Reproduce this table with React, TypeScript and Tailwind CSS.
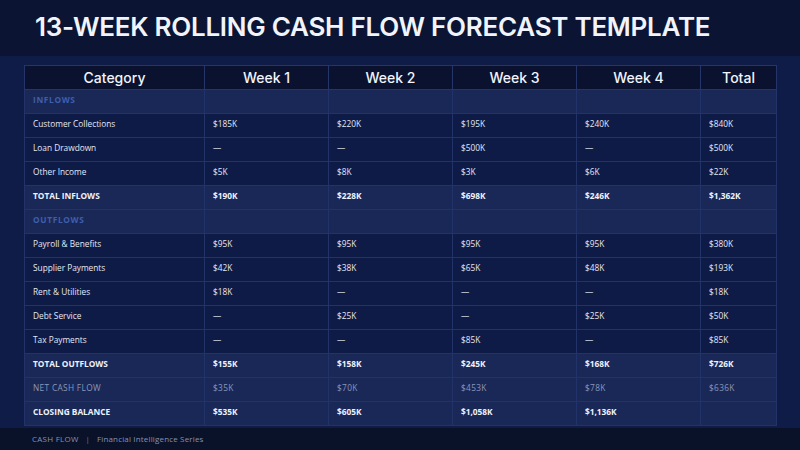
import React from "react";

type Row = {
  label: string;
  values: string[];
  kind: "section" | "item" | "total" | "net" | "closing";
};

const rows: Row[] = [
  { label: "INFLOWS", values: ["", "", "", "", ""], kind: "section" },
  { label: "Customer Collections", values: ["$185K", "$220K", "$195K", "$240K", "$840K"], kind: "item" },
  { label: "Loan Drawdown", values: ["—", "—", "$500K", "—", "$500K"], kind: "item" },
  { label: "Other Income", values: ["$5K", "$8K", "$3K", "$6K", "$22K"], kind: "item" },
  { label: "TOTAL INFLOWS", values: ["$190K", "$228K", "$698K", "$246K", "$1,362K"], kind: "total" },
  { label: "OUTFLOWS", values: ["", "", "", "", ""], kind: "section" },
  { label: "Payroll & Benefits", values: ["$95K", "$95K", "$95K", "$95K", "$380K"], kind: "item" },
  { label: "Supplier Payments", values: ["$42K", "$38K", "$65K", "$48K", "$193K"], kind: "item" },
  { label: "Rent & Utilities", values: ["$18K", "—", "—", "—", "$18K"], kind: "item" },
  { label: "Debt Service", values: ["—", "$25K", "—", "$25K", "$50K"], kind: "item" },
  { label: "Tax Payments", values: ["—", "—", "$85K", "—", "$85K"], kind: "item" },
  { label: "TOTAL OUTFLOWS", values: ["$155K", "$158K", "$245K", "$168K", "$726K"], kind: "total" },
  { label: "NET CASH FLOW", values: ["$35K", "$70K", "$453K", "$78K", "$636K"], kind: "net" },
  { label: "CLOSING BALANCE", values: ["$535K", "$605K", "$1,058K", "$1,136K", ""], kind: "closing" },
];

const headers = ["Week 1", "Week 2", "Week 3", "Week 4", "Total"];

function rowBg(kind: Row["kind"]) {
  if (kind === "item") return "bg-[#0f1b47]";
  return "bg-[#1a2858]";
}

function textCls(kind: Row["kind"]) {
  switch (kind) {
    case "section":
      return "text-[#3e5fae] font-bold tracking-[0.08em]";
    case "item":
      return "text-[#e3e8f4]";
    case "total":
    case "closing":
      return "text-[#eef2fa] font-bold";
    case "net":
      return "text-[#8b97b8] tracking-[0.04em]";
  }
}

export default function App() {
  return (
    <div className="w-[800px] h-[450px] flex flex-col bg-[#0f1c48] overflow-hidden font-['Open_Sans',sans-serif]">
      <div className="h-[56px] shrink-0 bg-[#0b1433] flex items-center pl-[35px] pb-[2px]">
        <h1 className="font-['Inter',sans-serif] font-semibold text-[26px] tracking-[-0.01em] text-[#f1f4fb] leading-none">
          13-WEEK ROLLING CASH FLOW FORECAST TEMPLATE
        </h1>
      </div>

      <div className="flex-1 px-[24px] pt-[9px]">
        <table className="border-collapse table-fixed w-[752px] border border-[#24356b]">
          <colgroup>
            <col className="w-[180px]" />
            <col className="w-[124px]" />
            <col className="w-[124px]" />
            <col className="w-[124px]" />
            <col className="w-[124px]" />
            <col className="w-[76px]" />
          </colgroup>
          <thead>
            <tr className="h-[24px] bg-[#0a1230]">
              <th className="border border-[#24356b] font-['Inter',sans-serif] font-medium text-[14px] text-[#f1f4fb] text-center leading-none">
                Category
              </th>
              {headers.map((h) => (
                <th
                  key={h}
                  className="border border-[#24356b] font-['Inter',sans-serif] font-medium text-[14px] text-[#f1f4fb] text-center leading-none"
                >
                  {h}
                </th>
              ))}
            </tr>
          </thead>
          <tbody>
            {rows.map((r) => (
              <tr key={r.label} className={`h-[24px] ${rowBg(r.kind)}`}>
                <td className={`border border-[#22336a] pl-[8px] pb-[2px] text-[8.3px] leading-none ${textCls(r.kind)}`}>
                  {r.label}
                </td>
                {r.values.map((v, i) => (
                  <td
                    key={i}
                    className={`border border-[#22336a] pl-[8px] pb-[2px] text-[8.3px] leading-none ${textCls(r.kind === "section" ? "item" : r.kind)}`}
                  >
                    {v}
                  </td>
                ))}
              </tr>
            ))}
          </tbody>
        </table>
      </div>

      <div className="h-[22px] shrink-0 bg-[#0a1229] flex items-center pl-[32px] text-[8px] text-[#8591b3]">
        <span className="tracking-[0.03em]">CASH FLOW</span>
        <span className="mx-[7px] text-[#6a7596]">|</span>
        <span className="tracking-[0.02em]">Financial Intelligence Series</span>
      </div>
    </div>
  );
}
